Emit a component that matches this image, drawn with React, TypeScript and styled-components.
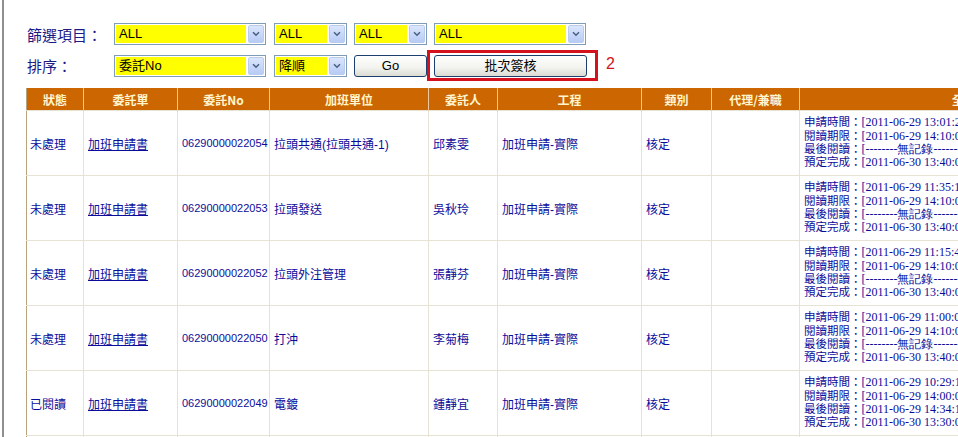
import React from "react";
import styled, { createGlobalStyle } from "styled-components";

const Global = createGlobalStyle`
  html, body { margin: 0; padding: 0; background: #fff; overflow: hidden; width: 958px; height: 437px; }
  body { font-family: "Liberation Sans", "Noto Sans CJK TC", sans-serif; }
  #root { height: 437px; }
`;

const Frame = styled.div`
  margin-left: 2px;
  border-left: 2px solid #8e8e8e;
  height: 437px;
  box-sizing: border-box;
  padding: 23px 0 0 22px;
  overflow: hidden;
`;

const FilterRow = styled.div<{ $mt?: number }>`
  display: flex;
  align-items: center;
  margin-top: ${(p) => p.$mt ?? 0}px;
  height: ${(p) => (p.$mt ? 31 : 22)}px;
`;

const Label = styled.div`
  width: 88px;
  padding-left: 1px;
  box-sizing: border-box;
  font-family: "Noto Sans CJK TC", sans-serif;
  font-size: 15px;
  color: #1b1b86;
  flex: none;
`;

const SelectBox = styled.div<{ $w: number; $gap?: number }>`
  width: ${(p) => p.$w}px;
  height: 22px;
  margin-right: ${(p) => p.$gap ?? 0}px;
  box-sizing: border-box;
  border: 1px solid #7f9db9;
  background: #fff;
  display: flex;
  align-items: stretch;
  padding: 1px;
  flex: none;
`;

const SelectValue = styled.div`
  flex: 1;
  background: #ffff00;
  margin-right: 2px;
  font-size: 13px;
  line-height: 18px;
  padding-left: 3px;
  color: #000;
  font-family: "Liberation Sans", "Noto Sans CJK TC", sans-serif;
  white-space: nowrap;
  overflow: hidden;
`;

const Arrow = styled.div`
  width: 16px;
  box-sizing: border-box;
  border: 1px solid #b9cbef;
  border-radius: 2px;
  background: linear-gradient(#dbe6fd, #b7cbf5);
  display: flex;
  align-items: center;
  justify-content: center;
`;

const Button = styled.button<{ $w: number; $gap?: number }>`
  width: ${(p) => p.$w}px;
  height: 22px;
  margin-right: ${(p) => p.$gap ?? 0}px;
  flex: none;
  box-sizing: border-box;
  border: 1px solid #1c3f6e;
  border-radius: 3px;
  background: linear-gradient(#ffffff, #f2f2ee 60%, #dcdcd4);
  font-family: "Liberation Sans", "Noto Sans CJK TC", sans-serif;
  font-size: 13px;
  color: #000;
  padding: 0;
  line-height: 20px;
`;

const Highlight = styled.div`
  flex: none;
  box-sizing: border-box;
  width: 171px;
  height: 31px;
  border: 3px solid #d4121e;
  padding: 2px 0 0 4px;
  margin-right: 8px;
`;

const Note = styled.div`
  color: #d4121e;
  font-size: 16px;
  font-family: "Liberation Sans", sans-serif;
  margin-top: -3px;
`;

const Table = styled.table`
  margin-top: 7px;
  border-collapse: collapse;
  table-layout: fixed;
  width: 1125px;
  border-left: 1px solid #b7a47c;
`;

const Th = styled.th`
  background: #cc6600;
  color: #fff6d0;
  font-family: "Noto Sans CJK TC", sans-serif;
  font-weight: 700;
  font-size: 12px;
  height: 22px;
  padding: 0;
  text-align: center;
  border-left: 1px solid #eec9a0;
  white-space: nowrap;
  overflow: hidden;
  &:first-child { border-left: none; }
`;

const Td = styled.td<{ $num?: boolean }>`
  height: 64px;
  padding: 0 0 0 4px;
  border: 1px solid #e7e3d4;
  vertical-align: middle;
  color: #0c0c9a;
  font-size: ${(p) => (p.$num ? 11 : 12)}px;
  font-family: "Liberation Sans", "Noto Sans CJK TC", sans-serif;
  white-space: nowrap;
  overflow: hidden;
  &:first-child { border-left: none; padding-left: 3px; }
`;

const Link = styled.a`
  color: #0c0c9a;
  text-decoration: underline;
`;

const TimeLine = styled.div`
  font-size: 11.5px;
  line-height: 13.3px;
  white-space: nowrap;
`;

const Stamp = styled.span`
  font-family: "Liberation Serif", serif;
  font-size: 12px;
`;

const Chevron = () => (
  <svg width="8" height="6" viewBox="0 0 8 6">
    <path d="M1 1.2 L4 4.2 L7 1.2" fill="none" stroke="#4d6185" strokeWidth="1.6" />
  </svg>
);

const Select = ({ w, gap, value }: { w: number; gap?: number; value: string }) => (
  <SelectBox $w={w} $gap={gap}>
    <SelectValue>{value}</SelectValue>
    <Arrow>
      <Chevron />
    </Arrow>
  </SelectBox>
);

const cols = [57, 94, 92, 159, 69, 144, 70, 88, 352];
const headers = ["狀態", "委託單", "委託No", "加班單位", "委託人", "工程", "類別", "代理/兼職", "全程時間"];

type Row = { st: string; no: string; unit: string; who: string; t: [string, string, string, string] };

const rows: Row[] = [
  { st: "未處理", no: "06290000022054", unit: "拉頭共通(拉頭共通-1)", who: "邱素雯", t: ["[2011-06-29 13:01:22]", "[2011-06-29 14:10:00]", "[--------無記錄--------]", "[2011-06-30 13:40:00]"] },
  { st: "未處理", no: "06290000022053", unit: "拉頭發送", who: "吳秋玲", t: ["[2011-06-29 11:35:18]", "[2011-06-29 14:10:00]", "[--------無記錄--------]", "[2011-06-30 13:40:00]"] },
  { st: "未處理", no: "06290000022052", unit: "拉頭外注管理", who: "張靜芬", t: ["[2011-06-29 11:15:41]", "[2011-06-29 14:10:00]", "[--------無記錄--------]", "[2011-06-30 13:40:00]"] },
  { st: "未處理", no: "06290000022050", unit: "打沖", who: "李菊梅", t: ["[2011-06-29 11:00:06]", "[2011-06-29 14:10:00]", "[--------無記錄--------]", "[2011-06-30 13:40:00]"] },
  { st: "已閱讀", no: "06290000022049", unit: "電鍍", who: "鍾靜宜", t: ["[2011-06-29 10:29:13]", "[2011-06-29 14:00:00]", "[2011-06-29 14:34:12]", "[2011-06-30 13:30:00]"] },
  { st: "未處理", no: "06290000022048", unit: "電鍍", who: "鍾靜宜", t: ["[2011-06-29 10:20:10]", "[2011-06-29 14:00:00]", "[--------無記錄--------]", "[2011-06-30 13:30:00]"] },
];

const labels = ["申請時間：", "閱讀期限：", "最後閱讀：", "預定完成："];

export default function App() {
  return (
    <>
      <Global />
      <Frame>
        <FilterRow>
          <Label>篩選項目：</Label>
          <Select w={152} gap={8} value="ALL" />
          <Select w={73} gap={7} value="ALL" />
          <Select w={73} gap={7} value="ALL" />
          <Select w={152} value="ALL" />
        </FilterRow>
        <FilterRow $mt={5}>
          <Label>排序：</Label>
          <Select w={152} gap={8} value="委託No" />
          <Select w={73} gap={7} value="降順" />
          <Button $w={73} $gap={0}>Go</Button>
          <Highlight>
            <Button $w={153}>批次簽核</Button>
          </Highlight>
          <Note>2</Note>
        </FilterRow>
        <Table>
          <colgroup>
            {cols.map((w, i) => (
              <col key={i} style={{ width: w }} />
            ))}
          </colgroup>
          <thead>
            <tr>
              {headers.map((h) => (
                <Th key={h}>{h}</Th>
              ))}
            </tr>
          </thead>
          <tbody>
            {rows.map((r) => (
              <tr key={r.no}>
                <Td>{r.st}</Td>
                <Td>
                  <Link href="#">加班申請書</Link>
                </Td>
                <Td $num>{r.no}</Td>
                <Td>{r.unit}</Td>
                <Td>{r.who}</Td>
                <Td>加班申請-實際</Td>
                <Td>核定</Td>
                <Td />
                <Td>
                  {r.t.map((v, i) => (
                    <TimeLine key={i}>
                      {labels[i]}
                      <Stamp>{v}</Stamp>
                    </TimeLine>
                  ))}
                </Td>
              </tr>
            ))}
          </tbody>
        </Table>
      </Frame>
    </>
  );
}
